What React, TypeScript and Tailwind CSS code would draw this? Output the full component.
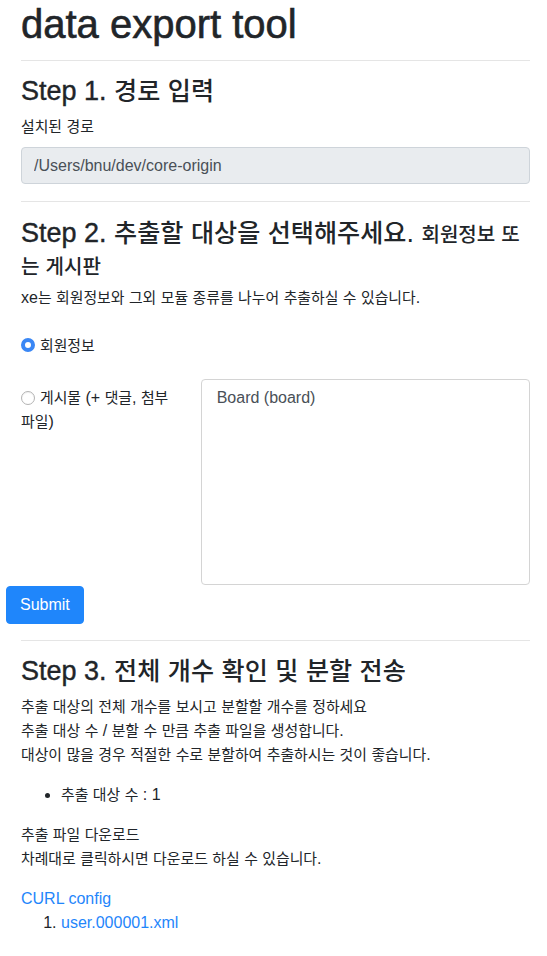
import React from "react";

// Hangul runs get a slightly smaller size so Noto CJK matches the narrower mac glyphs
const ko = (t: string) =>
  t.split(/([\uAC00-\uD7A3]+)/).map((s, i) =>
    i % 2 ? (
      <span key={i} className="text-[0.93em] leading-[0px]">
        {s}
      </span>
    ) : (
      s
    )
  );

const Radio: React.FC<{ checked?: boolean }> = ({ checked }) =>
  checked ? (
    <span className="inline-block w-[14px] h-[14px] rounded-full border-[4.5px] border-[#3a87f5] bg-white align-[-1px] mr-[5px]" />
  ) : (
    <span className="inline-block w-[14px] h-[14px] rounded-full border border-[#b3b3b3] bg-white align-[-1.5px] mr-[5px] shadow-[inset_0_1px_1px_rgba(0,0,0,0.06)]" />
  );

const Divider: React.FC<{ className?: string }> = ({ className = "" }) => (
  <hr className={`border-0 border-t border-[#e5e5e5] ${className}`} />
);

// latin part of the step titles, a touch heavier like the medium system font
const Step: React.FC<{ n: number }> = ({ n }) => (
  <span className="[-webkit-text-stroke:0.4px_#212529]">Step {n}.</span>
);

export default function App() {
  return (
    <div className="min-h-screen bg-white pl-[21px] pr-[17px] font-['Liberation_Sans','Noto_Sans_CJK_KR',sans-serif] text-[16px] leading-[24px] text-[#212529]">
      <h1 className="text-[40px] leading-[48px] font-medium mb-[12px] [-webkit-text-stroke:0.6px_#212529]">
        data export tool
      </h1>
      <Divider className="mb-[15px]" />

      {/* Step 1 */}
      <h3 className="text-[27px] leading-[31px] font-medium mb-[8px]">
        <Step n={1} /> {ko("경로 입력")}
      </h3>
      <label className="block mb-[8px]">{ko("설치된 경로")}</label>
      <input
        readOnly
        value="/Users/bnu/dev/core-origin"
        className="block w-full h-[37px] px-[12px] border border-[#ced4da] rounded-[4px] bg-[#e9ecef] text-[#495057] outline-none"
      />
      <Divider className="mt-[17px] mb-[16px]" />

      {/* Step 2 */}
      <h3 className="text-[27px] leading-[30px] font-medium mb-[4px]">
        <Step n={2} /> {ko("추출할 대상을 선택해주세요.")}{" "}
        <span className="text-[0.8em]">{ko("회원정보 또는 게시판")}</span>
      </h3>
      <p className="mb-[24px]">xe{ko("는 회원정보와 그외 모듈 종류를 나누어 추출하실 수 있습니다.")}</p>

      <div className="mb-[21px]">
        <Radio checked />
        {ko("회원정보")}
      </div>

      <div className="flex items-start -mx-[15px]">
        <div className="w-1/3 px-[15px] pt-[7px]">
          <Radio />
          {ko("게시물 (+ 댓글, 첨부 파일)")}
        </div>
        <div className="w-2/3 px-[15px]">
          <div className="h-[206px] border border-[#d4d4d4] rounded-[4px] pt-[6px] px-[15px] text-[#495057]">
            Board (board)
          </div>
        </div>
      </div>

      <button className="block -ml-[15px] mt-[1px] px-[13px] py-[6px] border border-[#1f86fb] bg-[#1f86fb] text-white rounded-[4px]">
        Submit
      </button>
      <Divider className="mt-[16px] mb-[15px]" />

      {/* Step 3 */}
      <h3 className="text-[27px] leading-[31px] font-medium mb-[8px]">
        <Step n={3} /> {ko("전체 개수 확인 및 분할 전송")}
      </h3>
      <p className="mb-[16px]">
        {ko("추출 대상의 전체 개수를 보시고 분할할 개수를 정하세요")}
        <br />
        {ko("추출 대상 수 / 분할 수 만큼 추출 파일을 생성합니다.")}
        <br />
        {ko("대상이 많을 경우 적절한 수로 분할하여 추출하시는 것이 좋습니다.")}
      </p>
      <ul className="list-disc pl-[40px] mb-[16px]">
        <li>{ko("추출 대상 수 : 1")}</li>
      </ul>
      <p className="mb-[16px]">
        {ko("추출 파일 다운로드")}
        <br />
        {ko("차례대로 클릭하시면 다운로드 하실 수 있습니다.")}
      </p>
      <a href="#" className="block text-[#1f86fb]">
        CURL config
      </a>
      <ol className="list-decimal pl-[40px]">
        <li>
          <a href="#" className="text-[#1f86fb]">
            user.000001.xml
          </a>
        </li>
      </ol>
    </div>
  );
}
